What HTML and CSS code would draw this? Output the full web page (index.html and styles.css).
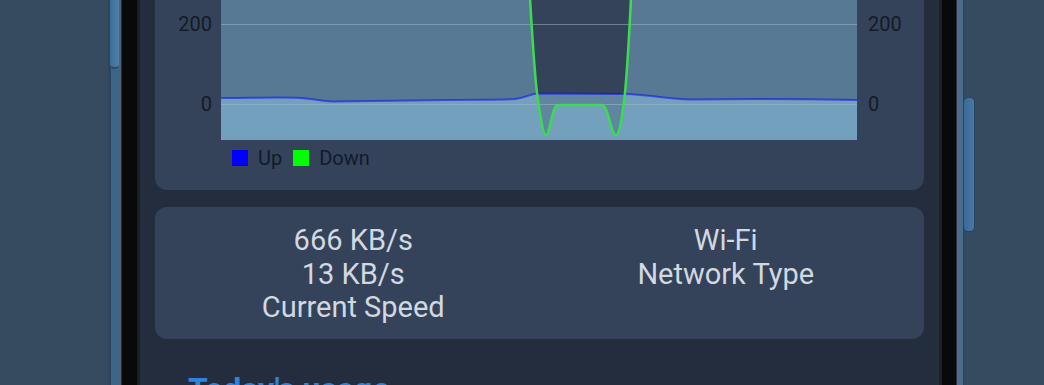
FILE: index.html
```html
<!DOCTYPE html>
<html lang="en">
<head>
<meta charset="utf-8">
<title>Network Speed</title>
<link rel="stylesheet" href="styles.css">
</head>
<body>
<div class="stage">
  <div class="phone">
    <div class="rail rail-left"><span class="btn btn-left"></span></div>
    <div class="bezel bezel-left"></div>
    <main class="screen">
      <section class="card chart-card">
        <div class="chart">
          <div class="axis axis-left">
            <span class="tick" style="top:74px">200</span>
            <span class="tick" style="top:154px">0</span>
          </div>
          <svg class="plot" width="636" height="200" viewBox="0 0 636 200">
            <path class="fill-down" d="M0,-10 L305,-10 C308,40 312,120 316,153 C319,175 322,195 325,195 C329,195 331,165 337,165 L381,165 C387,165 390,195 395,195 C399,195 402,170 404,153 C407,120 411,40 413,-10 L636,-10 L636,200 L0,200 Z"/>
            <path class="fill-up" d="M0,158 C39,158 59,157 79,158 C94,159 104,161.5 114,161.5 C139,161 179,160.5 229,160 C259,159.5 279,160 294,159 C304,158 309,154 316,153.5 L404,154 C429,155 449,159 469,159.5 C509,159 579,159 636,160 L636,200 L0,200 Z"/>
            <line class="grid" x1="0" y1="4.5" x2="636" y2="4.5"/>
            <line class="grid" x1="0" y1="84.5" x2="636" y2="84.5"/>
            <line class="grid" x1="0" y1="164.5" x2="636" y2="164.5"/>
            <path class="line-up" d="M0,158 C39,158 59,157 79,158 C94,159 104,161.5 114,161.5 C139,161 179,160.5 229,160 C259,159.5 279,160 294,159 C304,158 309,154 316,153.5 L404,154 C429,155 449,159 469,159.5 C509,159 579,159 636,160"/>
            <path class="line-down" d="M305,-10 C308,40 312,120 316,153 C319,175 322,195 325,195 C329,195 331,165 337,165 L381,165 C387,165 390,195 395,195 C399,195 402,170 404,153 C407,120 411,40 413,-10"/>
          </svg>
          <div class="axis axis-right">
            <span class="tick" style="top:74px">200</span>
            <span class="tick" style="top:154px">0</span>
          </div>
        </div>
        <div class="legend">
          <span class="swatch swatch-up"></span><span class="legend-label">Up</span>
          <span class="swatch swatch-down"></span><span class="legend-label">Down</span>
        </div>
      </section>
      <section class="card stats-card">
        <div class="stat">
          <div>666 KB/s</div>
          <div>13 KB/s</div>
          <div>Current Speed</div>
        </div>
        <div class="stat">
          <div>Wi-Fi</div>
          <div>Network Type</div>
        </div>
      </section>
      <h2 class="section-title">Today's usage</h2>
    </main>
    <div class="bezel bezel-right"></div>
    <div class="rail rail-right"><span class="btn btn-right"></span></div>
  </div>
</div>
</body>
</html>
```
FILE: styles.css
```css
html, body {
  margin: 0;
  padding: 0;
}
body {
  width: 1044px;
  height: 385px;
  overflow: hidden;
  background: #374b60;
  font-family: Roboto, "Noto Sans", "Liberation Sans", sans-serif;
}
.stage {
  height: 385px;
  padding-left: 108px;
  display: flex;
}
.phone {
  display: flex;
  width: 857px;
  height: 100%;
}
.rail {
  position: relative;
  height: 100%;
}
.rail-left {
  width: 13px;
  background: linear-gradient(to right, #2d465e 0 3px, #3c6588 3px 11px, #55606c 11px 13px);
}
.btn {
  position: absolute;
  display: block;
  border-radius: 5px;
}
.btn-left {
  left: 2px;
  top: -20px;
  width: 9px;
  height: 87px;
  background: linear-gradient(to right, #3f6d96, #4c80ae);
  border-bottom: 2px solid #2b4a66;
}
.bezel {
  height: 100%;
}
.bezel-left {
  width: 19px;
  background: linear-gradient(to right, #2a2c30 0 1px, #08090b 1px 16px, #1b1f27 16px 19px);
}
.bezel-right {
  width: 18px;
  background: linear-gradient(to right, #1c2029 0 3px, #08090b 3px 17px, #2c3036 17px 18px);
}
.rail-right {
  width: 8px;
  background: linear-gradient(to right, #4a6d8e 0 6px, #2f465d 6px 8px);
}
.btn-right {
  left: 6px;
  top: 97px;
  width: 10px;
  height: 133px;
  background: linear-gradient(to right, #3b6a97, #4479a8);
  border: 1px solid #29465f;
}
.screen {
  flex: 1;
  background: #242d3d;
  padding: 0 15px;
  overflow: hidden;
}
.card {
  background: #34435a;
  border-radius: 12px;
}
.chart-card {
  margin-top: -72px;
  padding: 12px 0 22px;
}
.chart {
  display: grid;
  grid-template-columns: 66px 636px 65px;
  height: 200px;
}
.axis {
  position: relative;
  height: 200px;
}
.tick {
  position: absolute;
  line-height: 20px;
  font-size: 20px;
  color: #141a27;
}
.axis-left .tick {
  right: 9px;
  text-align: right;
}
.axis-right .tick {
  left: 11px;
}
.plot {
  display: block;
}
.fill-down {
  fill: #8cc8e6;
  fill-opacity: 0.41;
}
.fill-up {
  fill: #8cc8e6;
  fill-opacity: 0.5;
}
.grid {
  stroke: #a4bccb;
  stroke-opacity: 0.5;
  stroke-width: 1;
}
.line-up {
  fill: none;
  stroke: #0000ff;
  stroke-opacity: 0.5;
  stroke-width: 2;
}
.line-down {
  fill: none;
  stroke: #3cdc50;
  stroke-width: 2.5;
  stroke-linejoin: round;
}
.legend {
  display: flex;
  align-items: center;
  height: 20px;
  margin-top: 8px;
  padding-left: 77px;
}
.swatch {
  width: 16px;
  height: 16px;
  margin-right: 10px;
}
.swatch-up {
  background: #0000ff;
}
.swatch-down {
  background: #00ff00;
}
.legend-label {
  font-size: 20px;
  line-height: 20px;
  color: #131a2a;
  margin-right: 11px;
}
.stats-card {
  margin-top: 17px;
  padding: 17px 12px 14px;
  display: grid;
  grid-template-columns: 1fr 1fr;
  text-align: center;
  font-size: 29px;
  line-height: 33.5px;
  color: #d2d8e0;
}
.section-title {
  margin: 31px 0 0 33px;
  font-size: 32px;
  line-height: 1.2;
  font-weight: 700;
  color: #2e84dc;
}
```
